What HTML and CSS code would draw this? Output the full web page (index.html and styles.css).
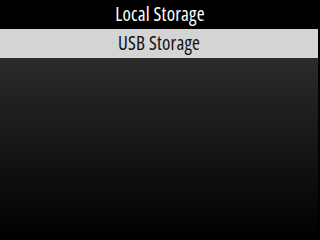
FILE: index.html
```html
<!DOCTYPE html>
<html>
<head>
<meta charset="utf-8">
<link rel="stylesheet" href="styles.css">
</head>
<body>
<div class="screen">
  <div class="title">Local Storage</div>
  <div class="list">
    <div class="item selected">USB Storage</div>
    <div class="fill"></div>
  </div>
</div>
</body>
</html>
```
FILE: styles.css
```css
html, body {
  margin: 0;
  padding: 0;
  background: #000;
}
.screen {
  width: 320px;
  height: 240px;
  display: flex;
  flex-direction: column;
  font-family: "Open Sans", "DejaVu Sans", sans-serif;
  font-stretch: 75%;
  overflow: hidden;
}
.title {
  height: 29px;
  line-height: 28px;
  text-align: center;
  color: #fff;
  font-size: 19px;
  letter-spacing: 0.2px;
  background: #000;
}
.list {
  flex: 1;
  display: flex;
  flex-direction: column;
  width: 318px;
}
.item {
  height: 29px;
  line-height: 28px;
  text-align: center;
  font-size: 19px;
  letter-spacing: 0.2px;
}
.selected {
  background: #d4d4d4;
  color: #111;
}
.fill {
  flex: 1;
  background: linear-gradient(#2b2b2b, #000);
}
```
